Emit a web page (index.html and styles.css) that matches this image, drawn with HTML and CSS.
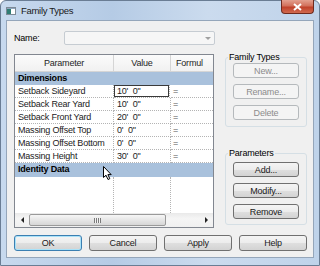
FILE: index.html
```html
<!DOCTYPE html>
<html lang="en">
<head>
    <meta charset="UTF-8">
    <title>Family Types</title>
    <link rel="stylesheet" href="styles.css">
</head>
<body>

<div class="window">
    <!-- Title bar -->
    <div class="titlebar">
        <svg class="app-icon" width="10" height="8" viewBox="0 0 10 8">
            <rect x="0.5" y="0.5" width="9" height="7" fill="#fff" stroke="#7d8a96"/>
            <rect x="1" y="1" width="4" height="6" fill="#2f7d74"/>
            <rect x="1" y="1" width="8" height="1" fill="#8fa6bd"/>
        </svg>
        <span class="title">Family Types</span>
        <div class="close">
            <svg width="9" height="8" viewBox="0 0 9 8">
                <path d="M1 1 L8 7 M8 1 L1 7" stroke="#fff" stroke-width="2"/>
            </svg>
        </div>
    </div>

    <div class="client">
        <div class="name-row">
            <label>Name:</label>
            <div class="combo"><span class="combo-arrow"></span></div>
        </div>

        <div class="main">
            <!-- Parameter grid -->
            <div class="grid">
                <div class="cells">
                    <div class="head">Parameter</div>
                    <div class="head">Value</div>
                    <div class="head formula-head">Formul</div>

                    <div class="band">Dimensions</div>

                    <div class="cell name">Setback Sideyard</div>
                    <div class="cell value editing">10'  0"</div>
                    <div class="cell formula">=</div>

                    <div class="cell name">Setback Rear Yard</div>
                    <div class="cell value">10'  0"</div>
                    <div class="cell formula">=</div>

                    <div class="cell name">Setback Front Yard</div>
                    <div class="cell value">20'  0"</div>
                    <div class="cell formula">=</div>

                    <div class="cell name">Massing Offset Top</div>
                    <div class="cell value">0'  0"</div>
                    <div class="cell formula">=</div>

                    <div class="cell name">Massing Offset Bottom</div>
                    <div class="cell value">0'  0"</div>
                    <div class="cell formula">=</div>

                    <div class="cell name">Massing Height</div>
                    <div class="cell value">30'  0"</div>
                    <div class="cell formula">=</div>

                    <div class="band">Identity Data</div>

                    <div class="filler"></div>
                    <div class="filler"></div>
                    <div class="filler last"></div>
                </div>
                <div class="hscroll">
                    <div class="sb-btn"><span class="tri-left"></span></div>
                    <div class="thumb"><span class="grip"></span></div>
                    <div class="sb-track"></div>
                    <div class="sb-btn"><span class="tri-right"></span></div>
                </div>
            </div>

            <!-- Side buttons -->
            <div class="side">
                <fieldset class="group">
                    <legend>Family Types</legend>
                    <button class="btn" disabled>New...</button>
                    <button class="btn" disabled>Rename...</button>
                    <button class="btn" disabled>Delete</button>
                </fieldset>
                <fieldset class="group params">
                    <legend>Parameters</legend>
                    <button class="btn">Add...</button>
                    <button class="btn">Modify...</button>
                    <button class="btn">Remove</button>
                </fieldset>
            </div>
        </div>

        <div class="actions">
            <button class="btn default">OK</button>
            <button class="btn">Cancel</button>
            <button class="btn">Apply</button>
            <button class="btn">Help</button>
        </div>
    </div>
</div>

<!-- mouse pointer over the grid -->
<svg class="cursor" width="10" height="15" viewBox="0 0 10 15">
    <path d="M0.5 0.5 L0.5 11.5 L3 9.2 L5 13.5 L6.8 12.7 L4.9 8.6 L8.2 8.6 Z" fill="#fff" stroke="#000" stroke-width="1"/>
</svg>

</body>
</html>
```

FILE: styles.css
```css
body {
    margin: 0;
    width: 320px;
    height: 266px;
    overflow: hidden;
    font-family: "Liberation Sans", Arial, sans-serif;
    font-size: 9px;
    letter-spacing: -0.2px;
    color: #000;
    background: #fff;
}

.window {
    width: 320px;
    height: 266px;
    box-sizing: border-box;
    border: 1px solid #6a7d94;
    border-radius: 6px 6px 0 0;
    padding: 0 5px;
    background: linear-gradient(to right, #c7d9ee, #b5cbe5 35%, #cbdbee 65%, #bfd3ea);
}

.titlebar {
    height: 19px;
    display: flex;
    align-items: flex-start;
}

.app-icon {
    margin-top: 6px;
}

.title {
    margin-left: 5px;
    margin-top: 4px;
    font-size: 9.5px;
    letter-spacing: -0.3px;
    color: #1a1a1a;
}

.close {
    margin-left: auto;
    margin-top: -1px;
    width: 33px;
    height: 14px;
    box-sizing: border-box;
    border: 1px solid #6e2a1e;
    border-top: none;
    border-radius: 0 0 4px 4px;
    background: linear-gradient(#e3a08f, #d2705b 45%, #c0412a 55%, #d06a4f);
    display: flex;
    justify-content: center;
    align-items: center;
}

.client {
    width: 308px;
    height: 238px;
    box-sizing: border-box;
    border: 1px solid #95a6ba;
    background-color: #f0f0f0;
    padding: 10px 0 0 7px;
}

.name-row {
    display: flex;
    align-items: center;
    height: 14px;
}

.name-row label {
    width: 50px;
}

.combo {
    width: 151px;
    height: 14px;
    box-sizing: border-box;
    border: 1px solid #c6ccd2;
    border-radius: 2px;
    background-color: #f6f6f6;
    display: flex;
    justify-content: flex-end;
    align-items: center;
    padding-right: 3px;
}

.combo-arrow {
    width: 0;
    height: 0;
    border-left: 3px solid transparent;
    border-right: 3px solid transparent;
    border-top: 3px solid #a0a0a0;
}

.main {
    display: flex;
    margin-top: 6px;
}

.grid {
    margin-top: 3px;
    width: 200px;
    height: 174px;
    box-sizing: border-box;
    border: 1px solid #828790;
    background-color: #fff;
    display: flex;
    flex-direction: column;
    overflow: hidden;
}

.cells {
    flex: 1;
    width: 216px;
    display: grid;
    grid-template-columns: 99px 57px 60px;
    grid-template-rows: 17px 13px repeat(6, 13px) 14px 1fr;
}

.head {
    box-sizing: border-box;
    border-right: 1px solid #d5d5d5;
    border-bottom: 1px solid #d5d5d5;
    background: linear-gradient(#fbfbfb, #f1f1f1);
    text-align: center;
    line-height: 16px;
    color: #1e1e1e;
}

.formula-head {
    text-align: left;
    padding-left: 5px;
}

.band {
    grid-column: 1 / -1;
    background-color: #a9c1dc;
    font-weight: bold;
    padding-left: 3px;
    line-height: 13px;
}

.cell {
    box-sizing: border-box;
    border-right: 1px dotted #b4b4b4;
    border-bottom: 1px dotted #b4b4b4;
    line-height: 12px;
    white-space: pre;
    color: #222;
}

.cell.name {
    padding-left: 3px;
}

.cell.value {
    padding-left: 3px;
}

.cell.formula {
    padding-left: 2px;
    color: #555;
}

.cell.editing {
    box-shadow: inset 0 0 0 1px #3a3a3a;
    margin-right: 1px;
}

.filler {
    border-right: 1px dotted #b4b4b4;
}

.filler.last {
    border-right: none;
}

.hscroll {
    height: 14px;
    flex-shrink: 0;
    display: flex;
    align-items: center;
    background: linear-gradient(#e9e9e9, #f5f5f5 40%, #f0f0f0);
}

.sb-btn {
    width: 14px;
    display: flex;
    justify-content: center;
}

.tri-left {
    border-top: 3px solid transparent;
    border-bottom: 3px solid transparent;
    border-right: 3px solid #222;
}

.tri-right {
    border-top: 3px solid transparent;
    border-bottom: 3px solid transparent;
    border-left: 3px solid #222;
}

.thumb {
    width: 137px;
    height: 12px;
    box-sizing: border-box;
    border: 1px solid #9a9a9a;
    border-radius: 2px;
    background: linear-gradient(#f6f6f6, #e6e6e6 50%, #d6d6d6);
    display: flex;
    justify-content: center;
    align-items: center;
}

.grip {
    width: 7px;
    height: 5px;
    background: repeating-linear-gradient(to right, #7a7a7a 0 1px, #f2f2f2 1px 2px);
}

.sb-track {
    flex: 1;
}

.side {
    margin-left: 11px;
    width: 82px;
}

.group {
    margin: 0;
    padding: 0 7px 6px;
    border: 1px solid #d5dfe5;
    border-radius: 3px;
}

.group legend {
    padding: 0 1px;
    margin-left: -5px;
    line-height: 12px;
}

.group .btn {
    display: block;
    width: 100%;
    height: 15px;
    margin-top: 6px;
}

.group .btn:first-of-type {
    margin-top: 0;
}

.group.params {
    margin-top: 20px;
    padding-bottom: 5px;
}

.group.params .btn:first-of-type {
    margin-top: 3px;
}

.btn {
    font-family: inherit;
    font-size: 9px;
    letter-spacing: -0.2px;
    height: 16px;
    padding: 0;
    color: #1a1a1a;
    border: 1px solid #707070;
    border-radius: 3px;
    background: linear-gradient(#f4f4f4, #ececec 50%, #dfdfdf 51%, #d3d3d3);
}

.btn:disabled {
    color: #8c8c8c;
    border-color: #b5b9bc;
    background: #f4f4f4;
}

.btn.default {
    border-color: #3c7fb1;
    box-shadow: inset 0 0 0 1px #a9e2f9;
}

.actions {
    display: flex;
    justify-content: space-between;
    width: 293px;
    margin-top: 7px;
}

.actions .btn {
    width: 68px;
}

.cursor {
    position: absolute;
    left: 103px;
    top: 166px;
}
```
